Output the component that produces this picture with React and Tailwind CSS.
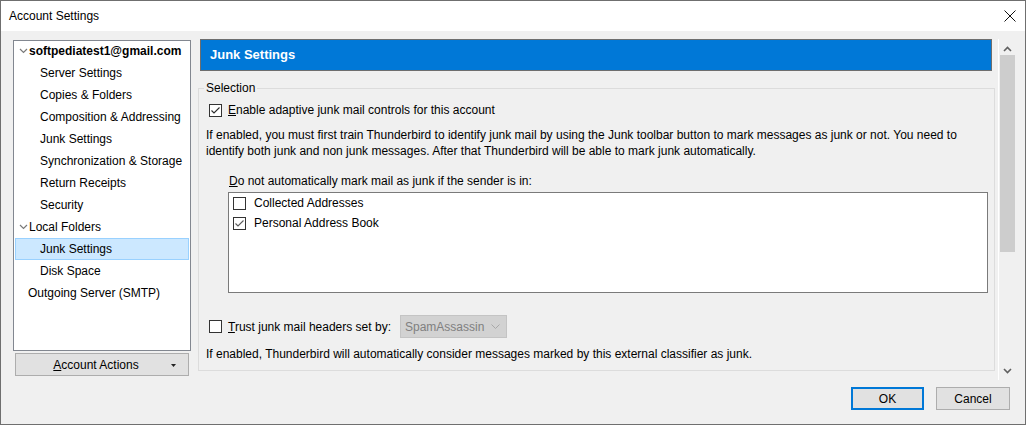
import React from 'react'

// Thunderbird "Account Settings" dialog, Junk Settings page.

const font = { fontFamily: '"Segoe UI", "Liberation Sans", Arial, sans-serif' }

function Chevron() {
  return (
    <svg width="9" height="6" viewBox="0 0 9 6" className="shrink-0">
      <polyline points="1,1 4.5,4.5 8,1" fill="none" stroke="#7a7a7a" strokeWidth="1.2" />
    </svg>
  )
}

function Check({ checked, muted }) {
  return (
    <span className="w-[13px] h-[13px] border border-[#333333] bg-white flex items-center justify-center shrink-0">
      {checked && (
        <svg width="11" height="11" viewBox="0 0 11 11">
          <polyline points="1.5,5.5 4,8 9.5,2.5" fill="none" stroke={muted ? '#5a5a5a' : '#2b2b2b'} strokeWidth="1.1" />
        </svg>
      )}
    </span>
  )
}

function TreeRow({ label, indent, bold, chevron, selected }) {
  return (
    <div
      className={`h-[22px] flex items-center mx-px border ${
        selected ? 'bg-[#cce8ff] border-[#99d1ff]' : 'border-transparent'
      }`}
    >
      <div className={`flex items-center ${indent ? 'pl-[24px]' : chevron ? 'pl-[2px]' : 'pl-[12px]'}`}>
        {chevron && <span className="w-[10px] flex justify-center mr-[1px]"><Chevron /></span>}
        <span className={bold ? 'font-bold' : ''}>{label}</span>
      </div>
    </div>
  )
}

const tree = [
  { label: 'softpediatest1@gmail.com', bold: true, chevron: true },
  { label: 'Server Settings', indent: true },
  { label: 'Copies & Folders', indent: true },
  { label: 'Composition & Addressing', indent: true },
  { label: 'Junk Settings', indent: true },
  { label: 'Synchronization & Storage', indent: true },
  { label: 'Return Receipts', indent: true },
  { label: 'Security', indent: true },
  { label: 'Local Folders', chevron: true },
  { label: 'Junk Settings', indent: true, selected: true },
  { label: 'Disk Space', indent: true },
  { label: 'Outgoing Server (SMTP)' },
]

export default function App() {
  return (
    <div
      className="w-[1026px] h-[425px] border border-[#6f6f6f] bg-[#f0f0f0] flex flex-col text-[12px] leading-[16px] text-black overflow-hidden"
      style={font}
    >
      {/* title bar */}
      <div className="h-[30px] shrink-0 bg-white flex items-center justify-between pl-[8px] pr-[9px]">
        <span className="text-[12px]">Account Settings</span>
        <svg width="12" height="12" viewBox="0 0 12 12">
          <path d="M0.5 0.5 L11.5 11.5 M11.5 0.5 L0.5 11.5" stroke="#111" strokeWidth="1" />
        </svg>
      </div>

      <div className="h-[350px] shrink-0 flex items-start">
        {/* left column */}
        <div className="pl-[12px] pt-[9px] w-[190px] shrink-0 flex flex-col">
          <div className="h-[311px] border border-[#828790] bg-white flex flex-col">
            <div className="-mt-px">
              {tree.map((r, i) => (
                <TreeRow key={i} {...r} />
              ))}
            </div>
          </div>
          <button className="mt-[2px] mx-[2px] h-[23px] border border-[#adadad] bg-[#e1e1e1] flex items-center relative">
            <span className="flex-1 text-center pr-[12px]">
              <span className="underline">A</span>ccount Actions
            </span>
            <svg width="5" height="3" viewBox="0 0 5 3" className="absolute right-[12px] top-[10px]">
              <polygon points="0,0 5,0 2.5,3" fill="#222" />
            </svg>
          </button>
        </div>

        {/* right pane */}
        <div className="ml-[7px] pt-[8px] flex h-full">
          <div className="w-[797px] flex flex-col">
            <div className="ml-[2px] w-[792px] h-[32px] bg-[#0078d7] border border-[#6e6e6e] flex items-center pl-[9px]">
              <span className="text-white font-bold text-[13px]">Junk Settings</span>
            </div>

            <fieldset className="mt-[9px] w-[797px] border border-[#dcdcdc] px-[5px] pb-[8px]">
              <legend className="px-[2px] leading-[16px]">Selection</legend>
              <div className="mt-[6px] ml-[5px] h-[16px] flex items-center gap-[6px]">
                <Check checked />
                <span>
                  <span className="underline">E</span>nable adaptive junk mail controls for this account
                </span>
              </div>
              <p className="mt-[9px] ml-[2px] w-[770px]">
                If enabled, you must first train Thunderbird to identify junk mail by using the Junk toolbar button to mark messages as junk or not. You need to identify both junk and non junk messages. After that Thunderbird will be able to mark junk automatically.
              </p>
              <div className="mt-[14px] ml-[25px]">
                <span className="underline">D</span>o not automatically mark mail as junk if the sender is in:
              </div>
              <div className="mt-[3px] ml-[24px] w-[760px] h-[101px] border border-[#7a7a7a] bg-white pl-[4px]">
                <div className="h-[20px] flex items-center gap-[8px]">
                  <Check />
                  <span>Collected Addresses</span>
                </div>
                <div className="h-[20px] flex items-center gap-[8px]">
                  <Check checked muted />
                  <span>Personal Address Book</span>
                </div>
              </div>
              <div className="mt-[22px] ml-[5px] h-[23px] flex items-center">
                <Check />
                <span className="ml-[6px]">
                  <span className="underline">T</span>rust junk mail headers set by:
                </span>
                <div className="ml-[9px] w-[107px] h-[23px] border border-[#c4c4c4] bg-[#d2d2d2] flex items-center justify-between pl-[4px] pr-[6px] text-[#808080]">
                  <span>SpamAssassin</span>
                  <svg width="9" height="5" viewBox="0 0 9 5">
                    <polyline points="0.5,0.5 4.5,4.5 8.5,0.5" fill="none" stroke="#a8a8a8" strokeWidth="1" />
                  </svg>
                </div>
              </div>
              <p className="mt-[8px] ml-[2px]">
                If enabled, Thunderbird will automatically consider messages marked by this external classifier as junk.
              </p>
            </fieldset>
          </div>

          {/* scrollbar */}
          <div className="ml-[3px] w-[18px] h-[341px] border-l border-white flex flex-col items-center">
            <svg width="9" height="6" viewBox="0 0 9 6" className="mt-[7px]">
              <polyline points="1,5 4.5,1.5 8,5" fill="none" stroke="#606060" strokeWidth="1.6" />
            </svg>
            <div className="mt-[3px] w-[15px] h-[197px] bg-[#cdcdcd]" />
            <div className="flex-1" />
            <svg width="9" height="6" viewBox="0 0 9 6" className="mb-[6px]">
              <polyline points="1,1 4.5,4.5 8,1" fill="none" stroke="#606060" strokeWidth="1.6" />
            </svg>
          </div>
        </div>
      </div>

      {/* footer */}
      <div className="flex justify-end gap-[12px] pr-[15px] pt-[6px]">
        <button className="w-[73px] h-[23px] border-2 border-[#0078d7] bg-[#e1e1e1]">OK</button>
        <button className="w-[74px] h-[23px] border border-[#adadad] bg-[#e1e1e1]">Cancel</button>
      </div>
    </div>
  )
}
